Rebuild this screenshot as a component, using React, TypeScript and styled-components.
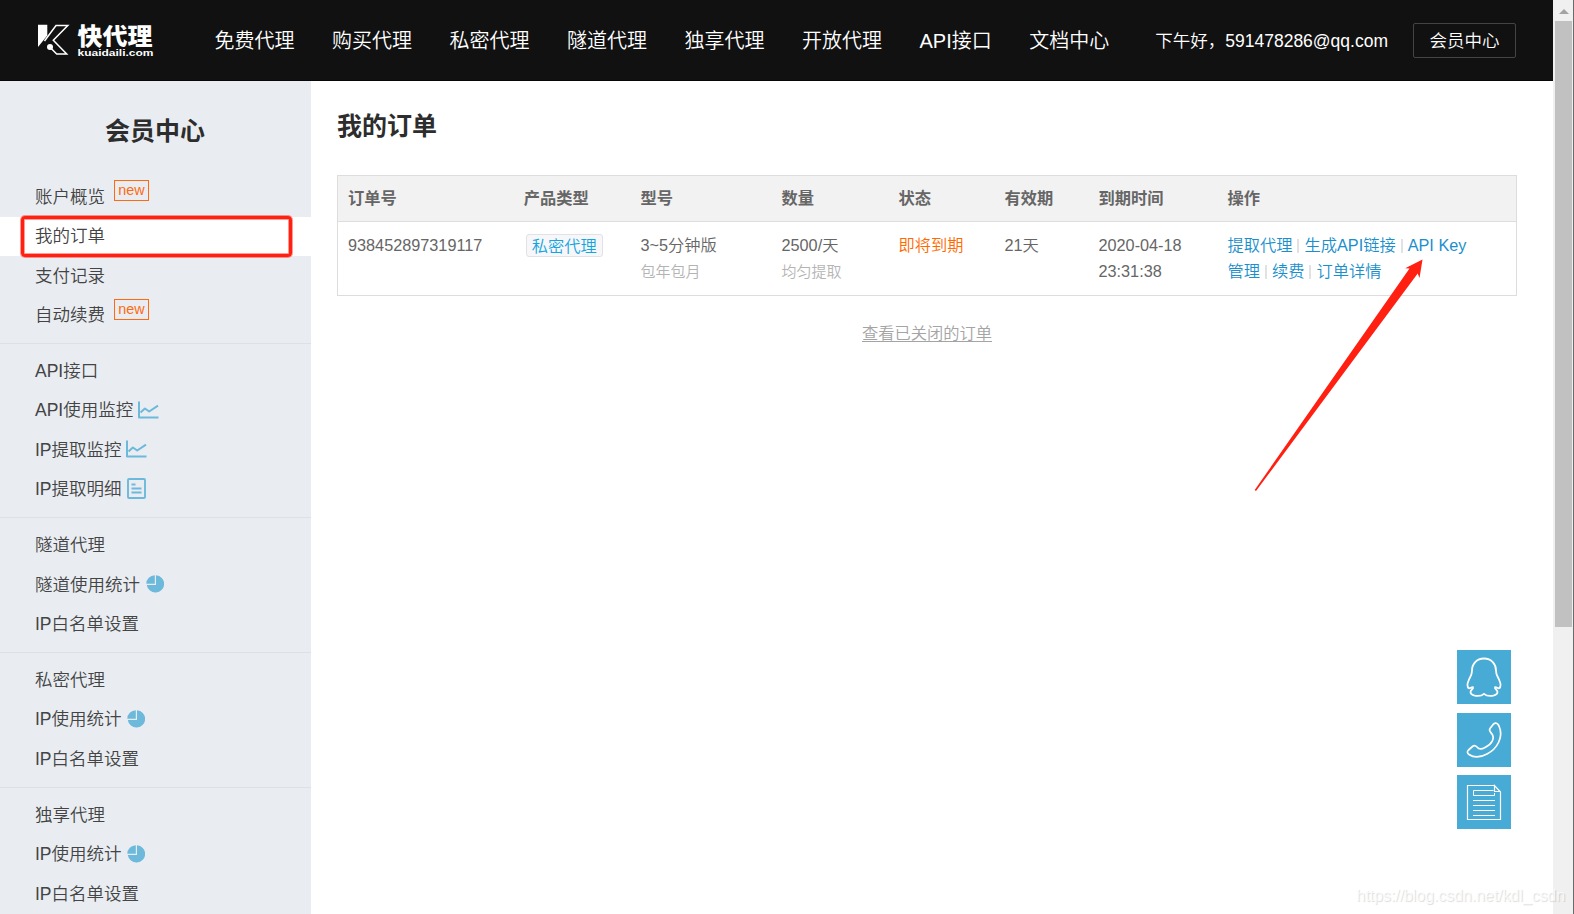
import React from 'react';
import styled, { createGlobalStyle, css } from 'styled-components';

const GlobalStyle = createGlobalStyle`
  * { box-sizing: border-box; }
  html, body { margin: 0; padding: 0; height: 100%; overflow: hidden; background: #fff; }
  body { font-family: "Liberation Sans", "Noto Sans CJK SC", sans-serif; font-size: 16.25px; font-weight: 350; color: #666; }
  a { color: inherit; text-decoration: none; }
`;

const Screen = styled.div`
  position: relative;
  display: flex;
  width: 1574px;
  height: 914px;
  overflow: hidden;
`;

const Page = styled.div`
  flex: 1;
  display: flex;
  flex-direction: column;
  min-width: 0;
`;

const Header = styled.header`
  display: flex;
  align-items: center;
  flex: none;
  height: 81px;
  padding: 0 37px 0 37px;
  background: #111;
  border-bottom: 1px solid #080606;
  color: #fff;
  white-space: nowrap;
`;

const Logo = styled.svg`
  flex: none;
  display: block;
  width: 118px;
  height: 34px;
  overflow: visible;
`;

const Nav = styled.nav`
  display: flex;
  gap: 37.5px;
  margin-left: 59.5px;
  padding-top: 2px;
  font-size: 20px;
  line-height: 40px;
`;

const Greeting = styled.div`
  margin-left: auto;
  padding-top: 2px;
  font-size: 17.5px;
  line-height: 36px;
`;

const MemberButton = styled.a`
  display: block;
  margin-left: 25px;
  width: 103px;
  height: 35px;
  border: 1px solid #444;
  border-radius: 2px;
  font-size: 17.5px;
  line-height: 35px;
  text-align: center;
`;

const Columns = styled.div`
  flex: 1;
  display: flex;
  min-height: 0;
`;

const Sidebar = styled.aside`
  flex: none;
  width: 311px;
  overflow: hidden;
  background: #e9edf2;
  color: #444;
`;

const SidebarTitle = styled.h2`
  margin: 0;
  padding: 29.6px 1px 26.8px 0;
  font-size: 25px;
  line-height: 40px;
  font-weight: 700;
  text-align: center;
  color: #2d2d2d;
`;

const MenuGroup = styled.ul`
  list-style: none;
  margin: 0 0 7.5px;
  padding: 0;
`;

const Divider = styled.div`
  height: 1.25px;
  margin-bottom: 7.5px;
  background: #dce1e6;
`;

const MenuItem = styled.li<{ $active?: boolean }>`
  display: flex;
  align-items: center;
  height: 39.5px;
  padding-left: 35px;
  font-size: 17.5px;
  line-height: 39px;
  white-space: nowrap;
  ${p => p.$active && css`background: #fff;`}
`;

const NewTag = styled.span`
  align-self: flex-start;
  margin: 3px 0 0 9px;
  width: 35px;
  height: 21px;
  border: 1px solid #ff6a10;
  color: #ff6a10;
  font-size: 14.4px;
  line-height: 18px;
  text-align: center;
`;

const MenuIcon = styled.svg<{ $gap: number }>`
  flex: none;
  margin: 0 0 2px ${p => p.$gap}px;
`;

const Main = styled.main`
  flex: 1;
  min-width: 0;
  padding: 25px 36px 0 26px;
`;

const Title = styled.h1`
  margin: 0 0 29px;
  font-size: 25px;
  line-height: 40px;
  font-weight: 700;
  color: #2d2d2d;
`;

const Table = styled.div`
  width: 1180px;
  border: 1px solid #ddd;
`;

const Row = styled.div<{ $head?: boolean }>`
  display: grid;
  grid-template-columns: 175.8px 116.7px 141px 117px 106px 94px 129px 1fr;
  padding-left: 10px;
  line-height: 26px;
  ${p => p.$head
    ? css`height: 46px; padding-top: 9px; background: #f2f2f2; border-bottom: 1px solid #ddd; font-weight: 700;`
    : css`height: 73px; padding-top: 10px;`}
`;

const Cell = styled.div`
  white-space: nowrap;
`;

const Note = styled.div`
  padding-top: 1px;
  color: #b4b4b4;
  font-size: 15px;
`;

const TypeTag = styled.span`
  display: block;
  width: 77px;
  height: 23px;
  margin: 2px 0 0 2px;
  border: 1px solid #e1e1e8;
  border-radius: 3px;
  background: #f7f7f9;
  color: #14a5e0;
  line-height: 22px;
  text-align: center;
`;

const Expiring = styled.span`
  color: #ff6a00;
`;

const Action = styled.a`
  color: #1a8fcc;
`;

const Bar = styled.span`
  display: inline-block;
  width: 2px;
  height: 14px;
  margin: 0 5px;
  vertical-align: -2px;
  background: #e2e2e2;
`;

const ClosedOrders = styled.div`
  width: 1180px;
  margin-top: 24px;
  line-height: 26px;
  text-align: center;
  color: #a4a4a4;
  a { text-decoration: underline; text-decoration-thickness: 1px; text-underline-offset: 2px; }
`;

const Scrollbar = styled.div`
  flex: none;
  display: flex;
  flex-direction: column;
  align-items: center;
  width: 21px;
  padding: 9px 0 0 1px;
  background: #f0f0f0;
  border-right: 1px solid #6a6a6a;
`;

const ScrollArrow = styled.div`
  width: 0;
  height: 0;
  border: 5px solid transparent;
  border-top: 0;
  border-bottom-color: #a3a3a3;
`;

const Thumb = styled.div`
  width: 17px;
  height: 606px;
  margin-top: 7px;
  background: #c1c1c1;
`;

const Contacts = styled.div`
  position: absolute;
  left: 1457px;
  top: 650px;
  display: flex;
  flex-direction: column;
  gap: 8.5px;
`;

const ContactButton = styled.button`
  display: block;
  width: 54px;
  height: 54px;
  padding: 0;
  border: 0;
  background: #48abd5;
  svg { display: block; }
`;

const Highlight = styled.div`
  position: absolute;
  left: 21px;
  top: 216px;
  width: 271px;
  height: 41px;
  border: 3px solid #ff2012;
  border-radius: 4px;
  box-shadow: 0 0 0 1px rgba(255, 32, 18, 0.45), inset 0 0 0 1px rgba(255, 32, 18, 0.45);
`;

const Pointer = styled.svg`
  position: absolute;
  left: 1250px;
  top: 255px;
`;

const Watermark = styled.div`
  position: absolute;
  right: 9px;
  top: 886px;
  font-size: 16px;
  line-height: 20px;
  letter-spacing: -0.07px;
  color: rgba(255, 255, 255, 0.75);
  text-shadow: 1px 1px 1px rgba(0, 0, 0, 0.14);
`;

type IconKind = 'line' | 'doc' | 'pie';

function SideIcon({ kind }: { kind: IconKind }) {
  if (kind === 'line') {
    return (
      <MenuIcon $gap={4.5} width="21" height="18" viewBox="0 0 21 18" fill="none" stroke="#6cb9db" strokeLinejoin="round">
        <path d="M1 .5v16h19.5" strokeWidth="2" />
        <path d="M2.5 11.5l4.4-4 4.3 3L20 4.6" strokeWidth="2" />
      </MenuIcon>
    );
  }
  if (kind === 'doc') {
    return (
      <MenuIcon $gap={5.5} width="19" height="21" viewBox="0 0 19 21" fill="none" stroke="#6cb9db">
        <rect x="1" y="1" width="17" height="19" rx="1" strokeWidth="1.9" />
        <path d="M4.5 6.5h4M4.5 10.5h10M4.5 14.5h10" strokeWidth="1.8" />
      </MenuIcon>
    );
  }
  return (
    <MenuIcon $gap={5.5} width="18" height="18" viewBox="0 0 18 18" fill="#6cb9db">
      <path d="M10 .2A8.7 8.7 0 1 1 .8 10H10z" />
      <path d="M8.8 .2V8.8H.3A8.6 8.6 0 0 1 8.8 .2z" />
    </MenuIcon>
  );
}

const groups: { label: string; active?: boolean; isNew?: boolean; icon?: IconKind }[][] = [
  [
    { label: '账户概览', isNew: true },
    { label: '我的订单', active: true },
    { label: '支付记录' },
    { label: '自动续费', isNew: true },
  ],
  [
    { label: 'API接口' },
    { label: 'API使用监控', icon: 'line' },
    { label: 'IP提取监控', icon: 'line' },
    { label: 'IP提取明细', icon: 'doc' },
  ],
  [{ label: '隧道代理' }, { label: '隧道使用统计', icon: 'pie' }, { label: 'IP白名单设置' }],
  [{ label: '私密代理' }, { label: 'IP使用统计', icon: 'pie' }, { label: 'IP白名单设置' }],
  [{ label: '独享代理' }, { label: 'IP使用统计', icon: 'pie' }, { label: 'IP白名单设置' }],
];

const navItems = ['免费代理', '购买代理', '私密代理', '隧道代理', '独享代理', '开放代理', 'API接口', '文档中心'];
const heads = ['订单号', '产品类型', '型号', '数量', '状态', '有效期', '到期时间', '操作'];

export default function App() {
  return (
    <Screen>
      <GlobalStyle />
      <Page>
        <Header>
          <Logo viewBox="0 0 118 34">
            <path d="M1 1.7H10.3V12.5L1 24z" fill="#fff" />
            <path d="M7.5 18L19 2.6H30.8L16.3 17.3L29.7 31H19.7L13 24.2" fill="none" stroke="#fff" strokeWidth="1.5" />
            <circle cx="13" cy="24" r="3" fill="#fff" />
            <text x="40.5" y="21.8" textLength="75" lengthAdjust="spacingAndGlyphs" fontSize="23.5" fontWeight="900" fill="#fff" fontFamily="'Noto Sans CJK SC', sans-serif">快代理</text>
            <text x="40.5" y="32.6" textLength="76" lengthAdjust="spacingAndGlyphs" fontSize="9.3" fontWeight="700" fill="#fff">kuaidaili.com</text>
          </Logo>
          <Nav>{navItems.map(n => <a key={n}>{n}</a>)}</Nav>
          <Greeting>下午好，591478286@qq.com</Greeting>
          <MemberButton>会员中心</MemberButton>
        </Header>
        <Columns>
          <Sidebar>
            <SidebarTitle>会员中心</SidebarTitle>
            {groups.map((items, i) => (
              <React.Fragment key={i}>
                {i > 0 && <Divider />}
                <MenuGroup>
                  {items.map(it => (
                    <MenuItem key={it.label} $active={it.active}>
                      {it.label}
                      {it.isNew && <NewTag>new</NewTag>}
                      {it.icon && <SideIcon kind={it.icon} />}
                    </MenuItem>
                  ))}
                </MenuGroup>
              </React.Fragment>
            ))}
          </Sidebar>
          <Main>
            <Title>我的订单</Title>
            <Table>
              <Row $head>{heads.map(h => <Cell key={h}>{h}</Cell>)}</Row>
              <Row>
                <Cell>938452897319117</Cell>
                <Cell><TypeTag>私密代理</TypeTag></Cell>
                <Cell>3~5分钟版<Note>包年包月</Note></Cell>
                <Cell>2500/天<Note>均匀提取</Note></Cell>
                <Cell><Expiring>即将到期</Expiring></Cell>
                <Cell>21天</Cell>
                <Cell>2020-04-18<br />23:31:38</Cell>
                <Cell>
                  <Action>提取代理</Action><Bar /><Action>生成API链接</Action><Bar /><Action>API Key<br />管理</Action>
                  <Bar /><Action>续费</Action><Bar /><Action>订单详情</Action>
                </Cell>
              </Row>
            </Table>
            <ClosedOrders><a>查看已关闭的订单</a></ClosedOrders>
          </Main>
        </Columns>
      </Page>
      <Scrollbar>
        <ScrollArrow />
        <Thumb />
      </Scrollbar>
      <Contacts>
        <ContactButton>
          <svg width="54" height="54" viewBox="0 0 54 54" fill="none" stroke="#fff" strokeWidth="1.8" strokeLinejoin="round">
            <path d="M27 8.5C19.5 8.5 15 14 15 20.5C15 25 13.5 26 12 29.5C10 34 10 37 11.8 38.2C13 38.7 14.5 36.8 16 37.2C17 38.5 13.5 40 13.5 42C13.5 46 23 47.5 27 43.8C31 47.5 40.5 46 40.5 42C40.5 40 37 38.5 38 37.2C39.5 36.8 41 38.7 42.2 38.2C44 37 44 34 42 29.5C40.5 26 39 25 39 20.5C39 14 34.5 8.5 27 8.5z" />
          </svg>
        </ContactButton>
        <ContactButton>
          <svg width="54" height="54" viewBox="0 0 54 54" fill="none" stroke="#fff" strokeWidth="1.7" strokeLinejoin="round">
            <path d="M36.5 11C38.5 9.5 40.5 10 42 13C47 24 40 36 30 41C23.5 44.5 17 45 12 41.5C10 40 10 38.5 11.5 37L15.5 33.5C17 32.2 18.5 32.5 20 34C21.5 36 24.5 36.5 28 34.5C35 31 38 25.5 35 21C33 18.5 31.5 17.5 33 15.5z" />
          </svg>
        </ContactButton>
        <ContactButton>
          <svg width="54" height="54" viewBox="0 0 54 54" fill="none" stroke="#fff" strokeWidth="1">
            <path d="M37.5 10.5H10.5V44.5H43.5V17L37.5 10.5V16.5H43.5" strokeWidth="1.2" />
            <path d="M36.5 15.5H16.5V20.5H37.5V18M16 25.5H38M16 30.5H38M16 35.5H38M16 40.5H38" />
          </svg>
        </ContactButton>
      </Contacts>
      <Highlight />
      <Pointer width="180" height="240" viewBox="0 0 180 240">
        <path d="M172.5 4.5L155.2 13.2L159.5 13.5L4.7 235L6 236L167.7 18.5L169.5 23z" fill="#ff2012" />
      </Pointer>
      <Watermark>https://blog.csdn.net/kdl_csdn</Watermark>
    </Screen>
  );
}
